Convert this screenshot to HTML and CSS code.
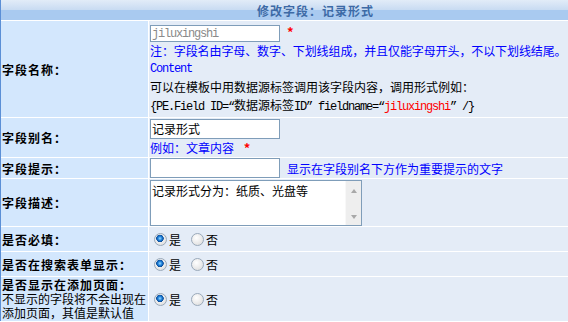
FILE: index.html
```html
<!DOCTYPE html>
<html lang="zh-CN">
<head>
    <meta charset="UTF-8">
    <meta name="viewport" content="width=device-width, initial-scale=1.0">
    <title>修改字段：记录形式</title>
    <link rel="stylesheet" href="styles.css">
</head>
<body>

    <form class="border">
        <div class="title">修改字段：记录形式</div>

        <!-- 字段名称 -->
        <div class="tdbg-left">字段名称：</div>
        <div class="tdbg field-name">
            <div><input type="text" class="txt txt-name" value="jiluxingshi" readonly><span class="req">*</span></div>
            <div class="line tips note">注：字段名由字母、数字、下划线组成，并且仅能字母开头，不以下划线结尾。</div>
            <div class="line tips code">Content</div>
            <div class="line">可以在模板中用数据源标签调用该字段内容，调用形式例如：</div>
            <div class="line code">{PE.Field ID=“<span class="cjk">数据源标签</span>ID” fieldname=“<span class="red">jiluxingshi</span>” /}</div>
        </div>

        <!-- 字段别名 -->
        <div class="tdbg-left">字段别名：</div>
        <div class="tdbg field-alias">
            <input type="text" class="txt" value="记录形式">
            <div class="line tips">例如：文章内容 <span class="req">*</span></div>
        </div>

        <!-- 字段提示 -->
        <div class="tdbg-left">字段提示：</div>
        <div class="tdbg">
            <input type="text" class="txt" value="">
            <span class="tips hint">显示在字段别名下方作为重要提示的文字</span>
        </div>

        <!-- 字段描述 -->
        <div class="tdbg-left">字段描述：</div>
        <div class="tdbg">
            <div class="memo">
                <textarea class="memo-text">记录形式分为：纸质、光盘等</textarea>
                <div class="scroll">
                    <span class="arrow-up"></span>
                    <span class="arrow-down"></span>
                </div>
            </div>
        </div>

        <div class="tdbg-left">是否必填：</div>
        <div class="tdbg">
            <label class="choice"><input type="radio" class="radio" name="required" checked>是</label>
            <label class="choice"><input type="radio" class="radio" name="required">否</label>
        </div>

        <div class="tdbg-left">是否在搜索表单显示：</div>
        <div class="tdbg">
            <label class="choice"><input type="radio" class="radio" name="search" checked>是</label>
            <label class="choice"><input type="radio" class="radio" name="search">否</label>
        </div>

        <div class="tdbg-left multi">
            <strong>是否显示在添加页面：</strong><br>
            不显示的字段将不会出现在添加页面，其值是默认值
        </div>
        <div class="tdbg">
            <label class="choice"><input type="radio" class="radio" name="show" checked>是</label>
            <label class="choice"><input type="radio" class="radio" name="show">否</label>
        </div>
    </form>

</body>
</html>
```

FILE: styles.css
```css
body {
    margin: 0;
    overflow: hidden;
    font-family: "Noto Sans CJK SC", "Liberation Sans", sans-serif;
    font-size: 12px;
    color: #000;
    background: #fff;
}

.border {
    display: grid;
    grid-template-columns: 147px 1fr;
    grid-template-rows: 20px 96px 39px 20px 47px 24px 24px 44px;
    gap: 1px;
    margin: 0;
    background: #fff;
    border-left: 1px solid #5b8fd6;
}

/* 标题在原页面中按更宽的表格居中 */
.title {
    grid-column: 1 / 3;
    display: flex;
    align-items: center;
    justify-content: center;
    padding-left: 62px;
    font-weight: bold;
    letter-spacing: 1px;
    color: #3d6aa6;
    background: linear-gradient(#e2ecf8, #c8dbf2 50%, #a9caf0 50%, #a9caf0);
}

.tdbg-left {
    display: flex;
    align-items: center;
    padding-left: 1px;
    font-weight: bold;
    letter-spacing: 1px;
    background: #d3e7fd;
}

.tdbg-left.multi {
    display: block;
    padding-top: 1px;
    line-height: 14px;
    font-weight: normal;
    letter-spacing: 0;
}

.tdbg-left.multi strong {
    letter-spacing: 1px;
}

.tdbg {
    display: flex;
    align-items: center;
    min-width: 0;
    overflow: hidden;
    padding-left: 1px;
    background: #e4ecf7;
}

.field-name,
.field-alias {
    flex-direction: column;
    align-items: flex-start;
    justify-content: center;
}

.field-name .line:first-of-type {
    margin-top: 4px;
}

.line {
    line-height: 18px;
    white-space: nowrap;
}

.note {
    letter-spacing: -0.1px;
}

.tips {
    color: #0000ff;
}

.req,
.red {
    color: #ff0000;
}

.req {
    margin-left: 7px;
    font-size: 13px;
    font-weight: bold;
}

.code {
    font-family: "Liberation Mono", "Noto Sans CJK SC", monospace;
    letter-spacing: -1.2px;
}

.code .cjk {
    font-family: "Noto Sans CJK SC", sans-serif;
    letter-spacing: 0;
}

.txt {
    box-sizing: border-box;
    width: 130px;
    height: 20px;
    margin: 0;
    padding: 0 1px;
    border: 1px solid #7f9db9;
    background: #fff;
    font-family: "Noto Sans CJK SC", sans-serif;
    font-size: 12px;
    color: #000;
    outline: none;
}

.txt-name {
    height: 17px;
    font-family: "Liberation Mono", monospace;
    letter-spacing: -1.2px;
    color: #8a8a8a;
}

.hint {
    margin-left: 7px;
    white-space: nowrap;
}

.memo {
    box-sizing: border-box;
    display: flex;
    width: 212px;
    height: 46px;
    border: 1px solid #7f9db9;
    background: #fff;
}

.memo-text {
    flex: 1;
    margin: 0;
    padding: 1px 1px;
    border: none;
    resize: none;
    overflow: hidden;
    font-family: "Noto Sans CJK SC", sans-serif;
    font-size: 12px;
    line-height: 18px;
    outline: none;
}

.scroll {
    width: 16px;
    display: flex;
    flex-direction: column;
    align-items: center;
    justify-content: space-between;
    padding: 8px 0 6px;
    box-sizing: border-box;
    background: #eeeeee;
    border-left: 1px solid #f8f8f8;
}

.arrow-up,
.arrow-down {
    width: 0;
    height: 0;
    border-left: 3.5px solid transparent;
    border-right: 3.5px solid transparent;
}

.arrow-up {
    border-bottom: 4px solid #a8a8a8;
}

.arrow-down {
    border-top: 4px solid #a8a8a8;
}

.choice {
    display: inline-flex;
    align-items: center;
    margin-right: 6px;
}

.radio {
    appearance: none;
    width: 13px;
    height: 13px;
    margin: 0 2px 0 4px;
    border: 1px solid #9aa9ba;
    border-radius: 50%;
    background: radial-gradient(circle at 40% 35%, #ffffff, #d8d8d8);
}

.radio:checked {
    background:
        radial-gradient(circle at 45% 40%, #9fdcff 0, #1f82dc 2px, #0b4c99 3.5px, transparent 4px),
        radial-gradient(circle at 40% 35%, #ffffff, #d8d8d8);
}
```
